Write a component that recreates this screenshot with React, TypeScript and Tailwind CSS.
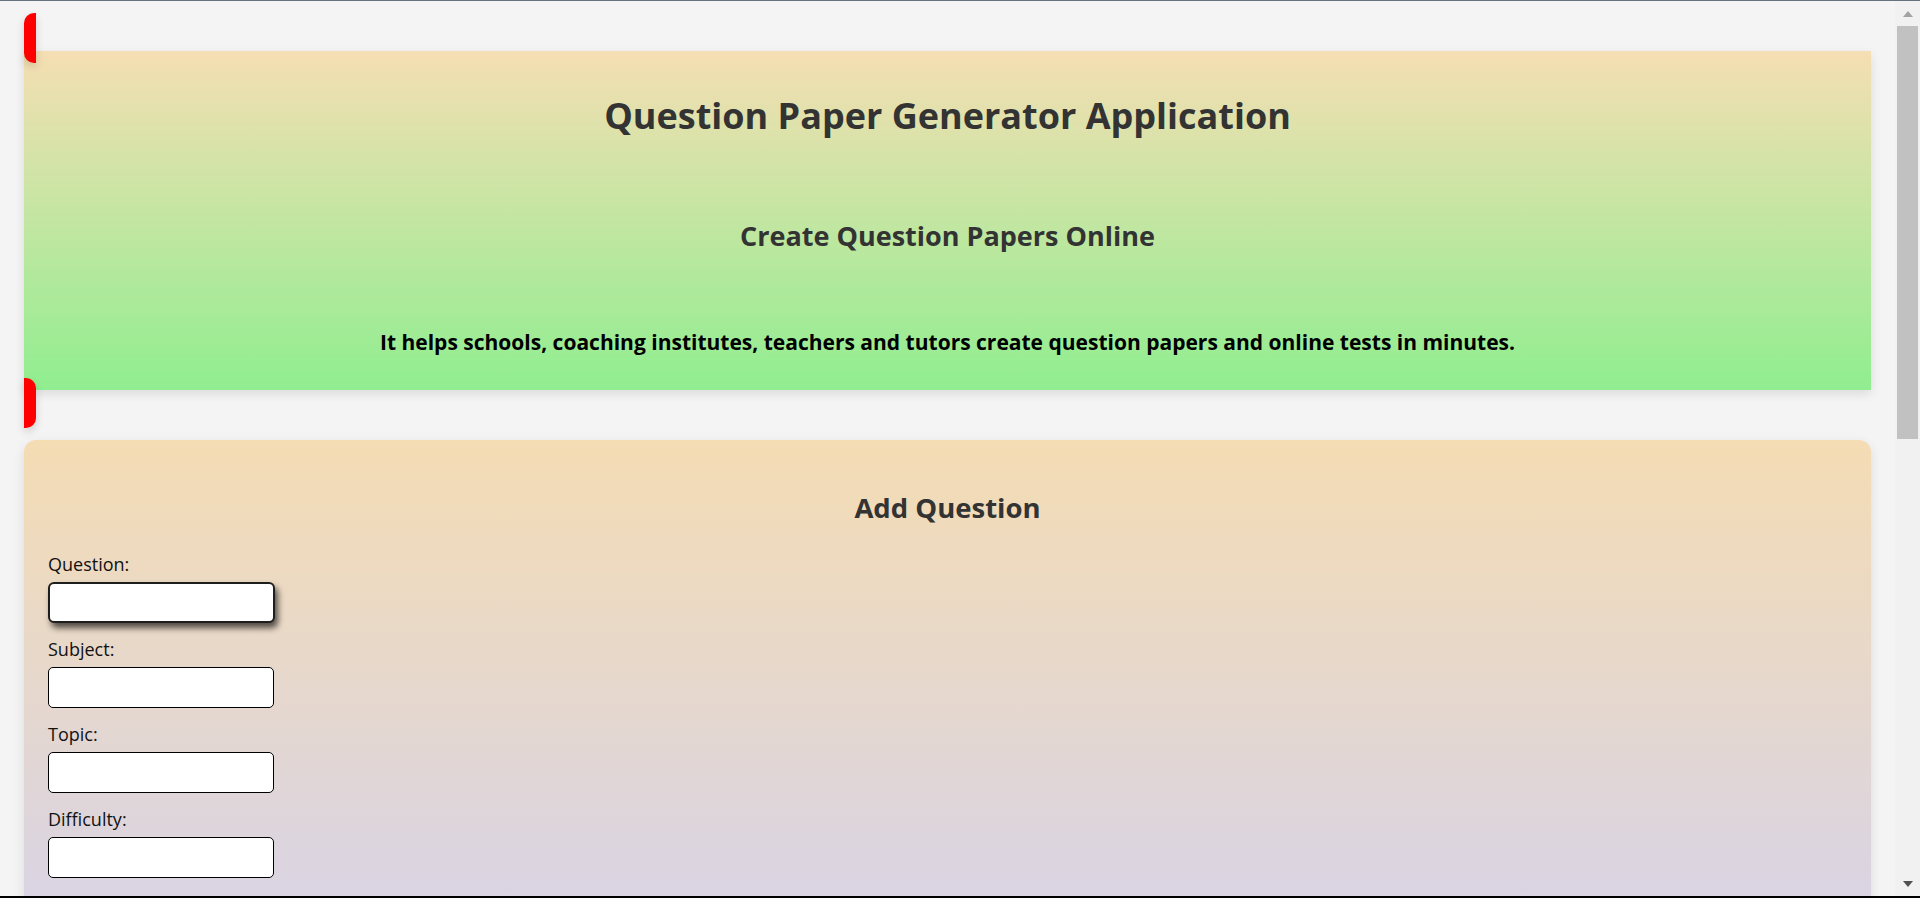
import React from "react";

const fields = ["Question", "Subject", "Topic", "Difficulty", "Marks", "Type"];

function Field({ label, active }: { label: string; active?: boolean }) {
  return (
    <div className="flex flex-col">
      <label className="mb-[6px] text-[18px] leading-[24px] text-[#111]">{label}:</label>
      <input
        type="text"
        className={
          active
            ? "h-[41px] w-[227px] rounded-[6px] border-2 border-[#1e1e1e] bg-white shadow-[3px_5px_6px_rgba(0,0,0,0.65)] outline-none"
            : "h-[41px] w-[226px] rounded-[5px] border border-black bg-white outline-none"
        }
      />
    </div>
  );
}

function Scrollbar() {
  return (
    <div className="flex w-[25px] shrink-0 flex-col bg-[#f1f1f1]">
      <div className="flex h-[25px] items-center justify-center">
        <svg width="10" height="6" viewBox="0 0 10 6">
          <path d="M5 0 L10 6 L0 6 Z" fill="#a3a3a3" />
        </svg>
      </div>
      <div className="flex-1 px-[2px]">
        <div className="h-[413px] bg-[#c1c1c1]" />
      </div>
      <div className="flex h-[25px] items-center justify-center">
        <svg width="10" height="6" viewBox="0 0 10 6">
          <path d="M0 0 L10 0 L5 6 Z" fill="#505050" />
        </svg>
      </div>
    </div>
  );
}

export default function App() {
  return (
    <div className="flex h-[898px] w-full flex-col overflow-hidden bg-[#f4f4f4] font-['Open_Sans',sans-serif]">
      <div className="h-px shrink-0 bg-[#66727f]" />
      <div className="flex min-h-0 flex-1">
        <main className="flex min-w-0 flex-1 flex-col overflow-hidden px-6 pt-[50px]">
          {/* Header */}
          <header className="relative flex shrink-0 flex-col items-center bg-[linear-gradient(#f5deb3,#90ee90)] pb-[34px] pt-[45px] text-center shadow-[0_4px_10px_rgba(0,0,0,0.1)]">
            <span className="absolute left-0 top-[-38px] h-[50px] w-[12px] rounded-l-[10px] bg-[#ff0000] shadow-[0_4px_8px_rgba(0,0,0,0.15)]" />
            <h1 className="text-[36px] font-bold leading-[40px] text-[#333]">
              Question Paper Generator Application
            </h1>
            <h2 className="mt-[84px] text-[27px] font-bold leading-[32px] text-[#333]">
              Create Question Papers Online
            </h2>
            <p className="mt-[76px] text-[21px] font-bold leading-[28px] text-black">
              It helps schools, coaching institutes, teachers and tutors create question papers and online tests in minutes.
            </p>
            <span className="absolute bottom-[-38px] left-0 h-[50px] w-[12px] rounded-r-[10px] bg-[#ff0000] shadow-[0_4px_8px_rgba(0,0,0,0.15)]" />
          </header>

          {/* Add question form */}
          <section className="mt-[50px] flex shrink-0 flex-col rounded-[12px] bg-[linear-gradient(to_bottom,#f4dcb3_0px,#dad4e3_456px,#d3d3ee_100%)] px-6 pb-10 pt-[51px] shadow-[0_4px_12px_rgba(0,0,0,0.1)]">
            <h2 className="text-center text-[27.5px] font-bold leading-[34px] text-[#333]">Add Question</h2>
            <div className="mt-[27px] flex flex-col gap-[14px]">
              {fields.map((f, i) => (
                <Field key={f} label={f} active={i === 0} />
              ))}
            </div>
            <button className="mt-6 h-[44px] w-[160px] rounded-[6px] bg-[#4caf50] text-[18px] font-bold text-white">
              Add Question
            </button>
            <div className="h-[700px]" />
          </section>
        </main>
        <Scrollbar />
      </div>
      <div className="h-[2px] shrink-0 bg-black" />
    </div>
  );
}
